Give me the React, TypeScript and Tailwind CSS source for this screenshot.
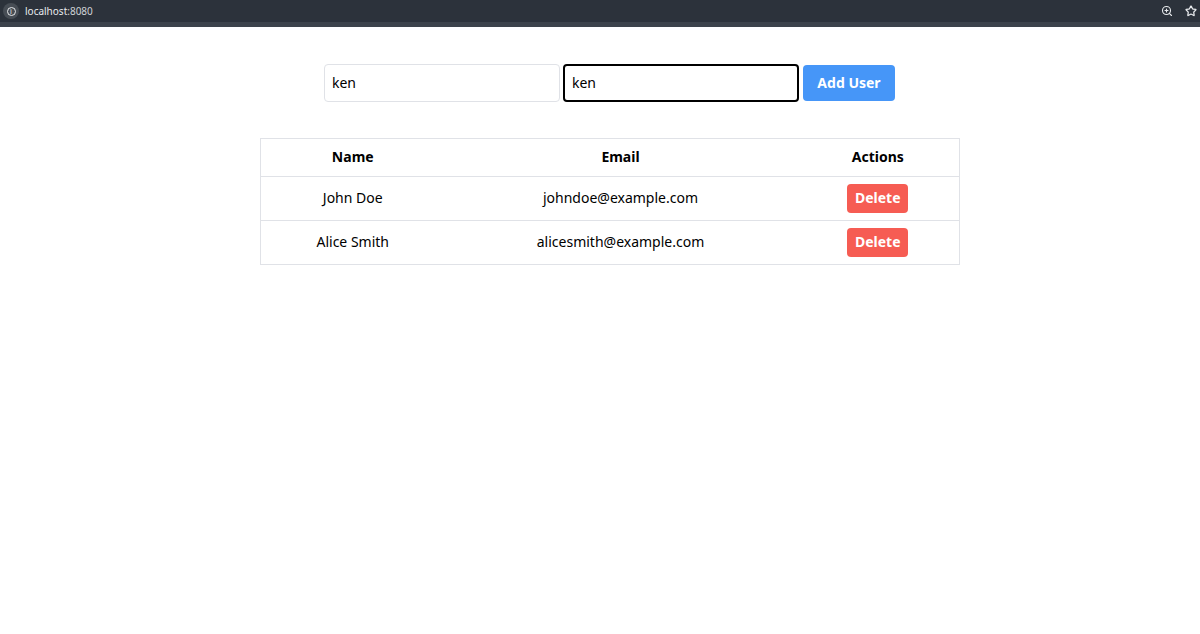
import { useState } from 'react'
import { Star, ZoomIn } from 'lucide-react'

const users = [
  { name: 'John Doe', email: 'johndoe@example.com' },
  { name: 'Alice Smith', email: 'alicesmith@example.com' },
]

function BrowserBar() {
  return (
    <div className="h-[27px] bg-[#2c323b] border-b-[5px] border-[#3c424b] flex items-center justify-between px-[3px]">
      <div className="flex items-center gap-[6px]">
        <span className="size-[16px] rounded-full bg-[#474d55] flex items-center justify-center">
          <span className="size-[9px] rounded-full border border-[#e6e8ea] flex items-center justify-center text-[7px] leading-none text-[#e6e8ea]">
            i
          </span>
        </span>
        <span className="text-[10px] leading-none text-[#e8eaed]">
          localhost<span className="text-[#d0d3d7]">:8080</span>
        </span>
      </div>
      <div className="flex items-center gap-[12px]">
        <ZoomIn className="size-[12px] text-[#e8eaed]" strokeWidth={2.25} />
        <Star className="size-[12px] text-[#e8eaed]" strokeWidth={2.5} />
      </div>
    </div>
  )
}

export default function App() {
  const [name, setName] = useState('ken')
  const [email, setEmail] = useState('ken')

  return (
    <div className="min-h-[634px] bg-white text-black text-[14px] font-['Noto_Sans',sans-serif]">
      <BrowserBar />

      <form
        className="mt-[37px] flex justify-center items-center gap-[3px] pl-[19px]"
        onSubmit={(e) => e.preventDefault()}
      >
        <input
          value={name}
          onChange={(e) => setName(e.target.value)}
          className="w-[236px] h-[38px] rounded-[4px] border border-[#e0e2e7] pl-[7px] pr-[8px] pb-[1px] text-black outline-none"
        />
        <input
          value={email}
          onChange={(e) => setEmail(e.target.value)}
          className="w-[236px] h-[38px] rounded-[4px] border-2 border-black px-[7px] pb-[1px] text-black outline-none"
        />
        <button
          type="submit"
          className="ml-[1px] w-[92px] h-[36px] rounded-[4px] bg-[#4696f8] pb-[2px] text-white font-bold"
        >
          Add User
        </button>
      </form>

      <div className="mt-[36px] flex justify-center pl-[20px]">
        <table className="w-[699px] table-fixed border-collapse border border-[#e0e2e7]">
          <colgroup>
            <col className="w-[184px]" />
            <col className="w-[352px]" />
            <col className="w-[163px]" />
          </colgroup>
          <thead>
            <tr className="h-[38px]">
              <th className="pb-[2px] font-bold">Name</th>
              <th className="pb-[2px] font-bold">Email</th>
              <th className="pb-[2px] font-bold">Actions</th>
            </tr>
          </thead>
          <tbody>
            {users.map((user) => (
              <tr key={user.email} className="h-[44px] border-t border-[#e0e2e7]">
                <td className="pb-[2px] text-center">{user.name}</td>
                <td className="pb-[2px] text-center">{user.email}</td>
                <td className="text-center">
                  <button className="w-[61px] h-[29px] rounded-[4px] bg-[#f65c53] pb-[2px] text-white font-bold leading-none">
                    Delete
                  </button>
                </td>
              </tr>
            ))}
          </tbody>
        </table>
      </div>
    </div>
  )
}
